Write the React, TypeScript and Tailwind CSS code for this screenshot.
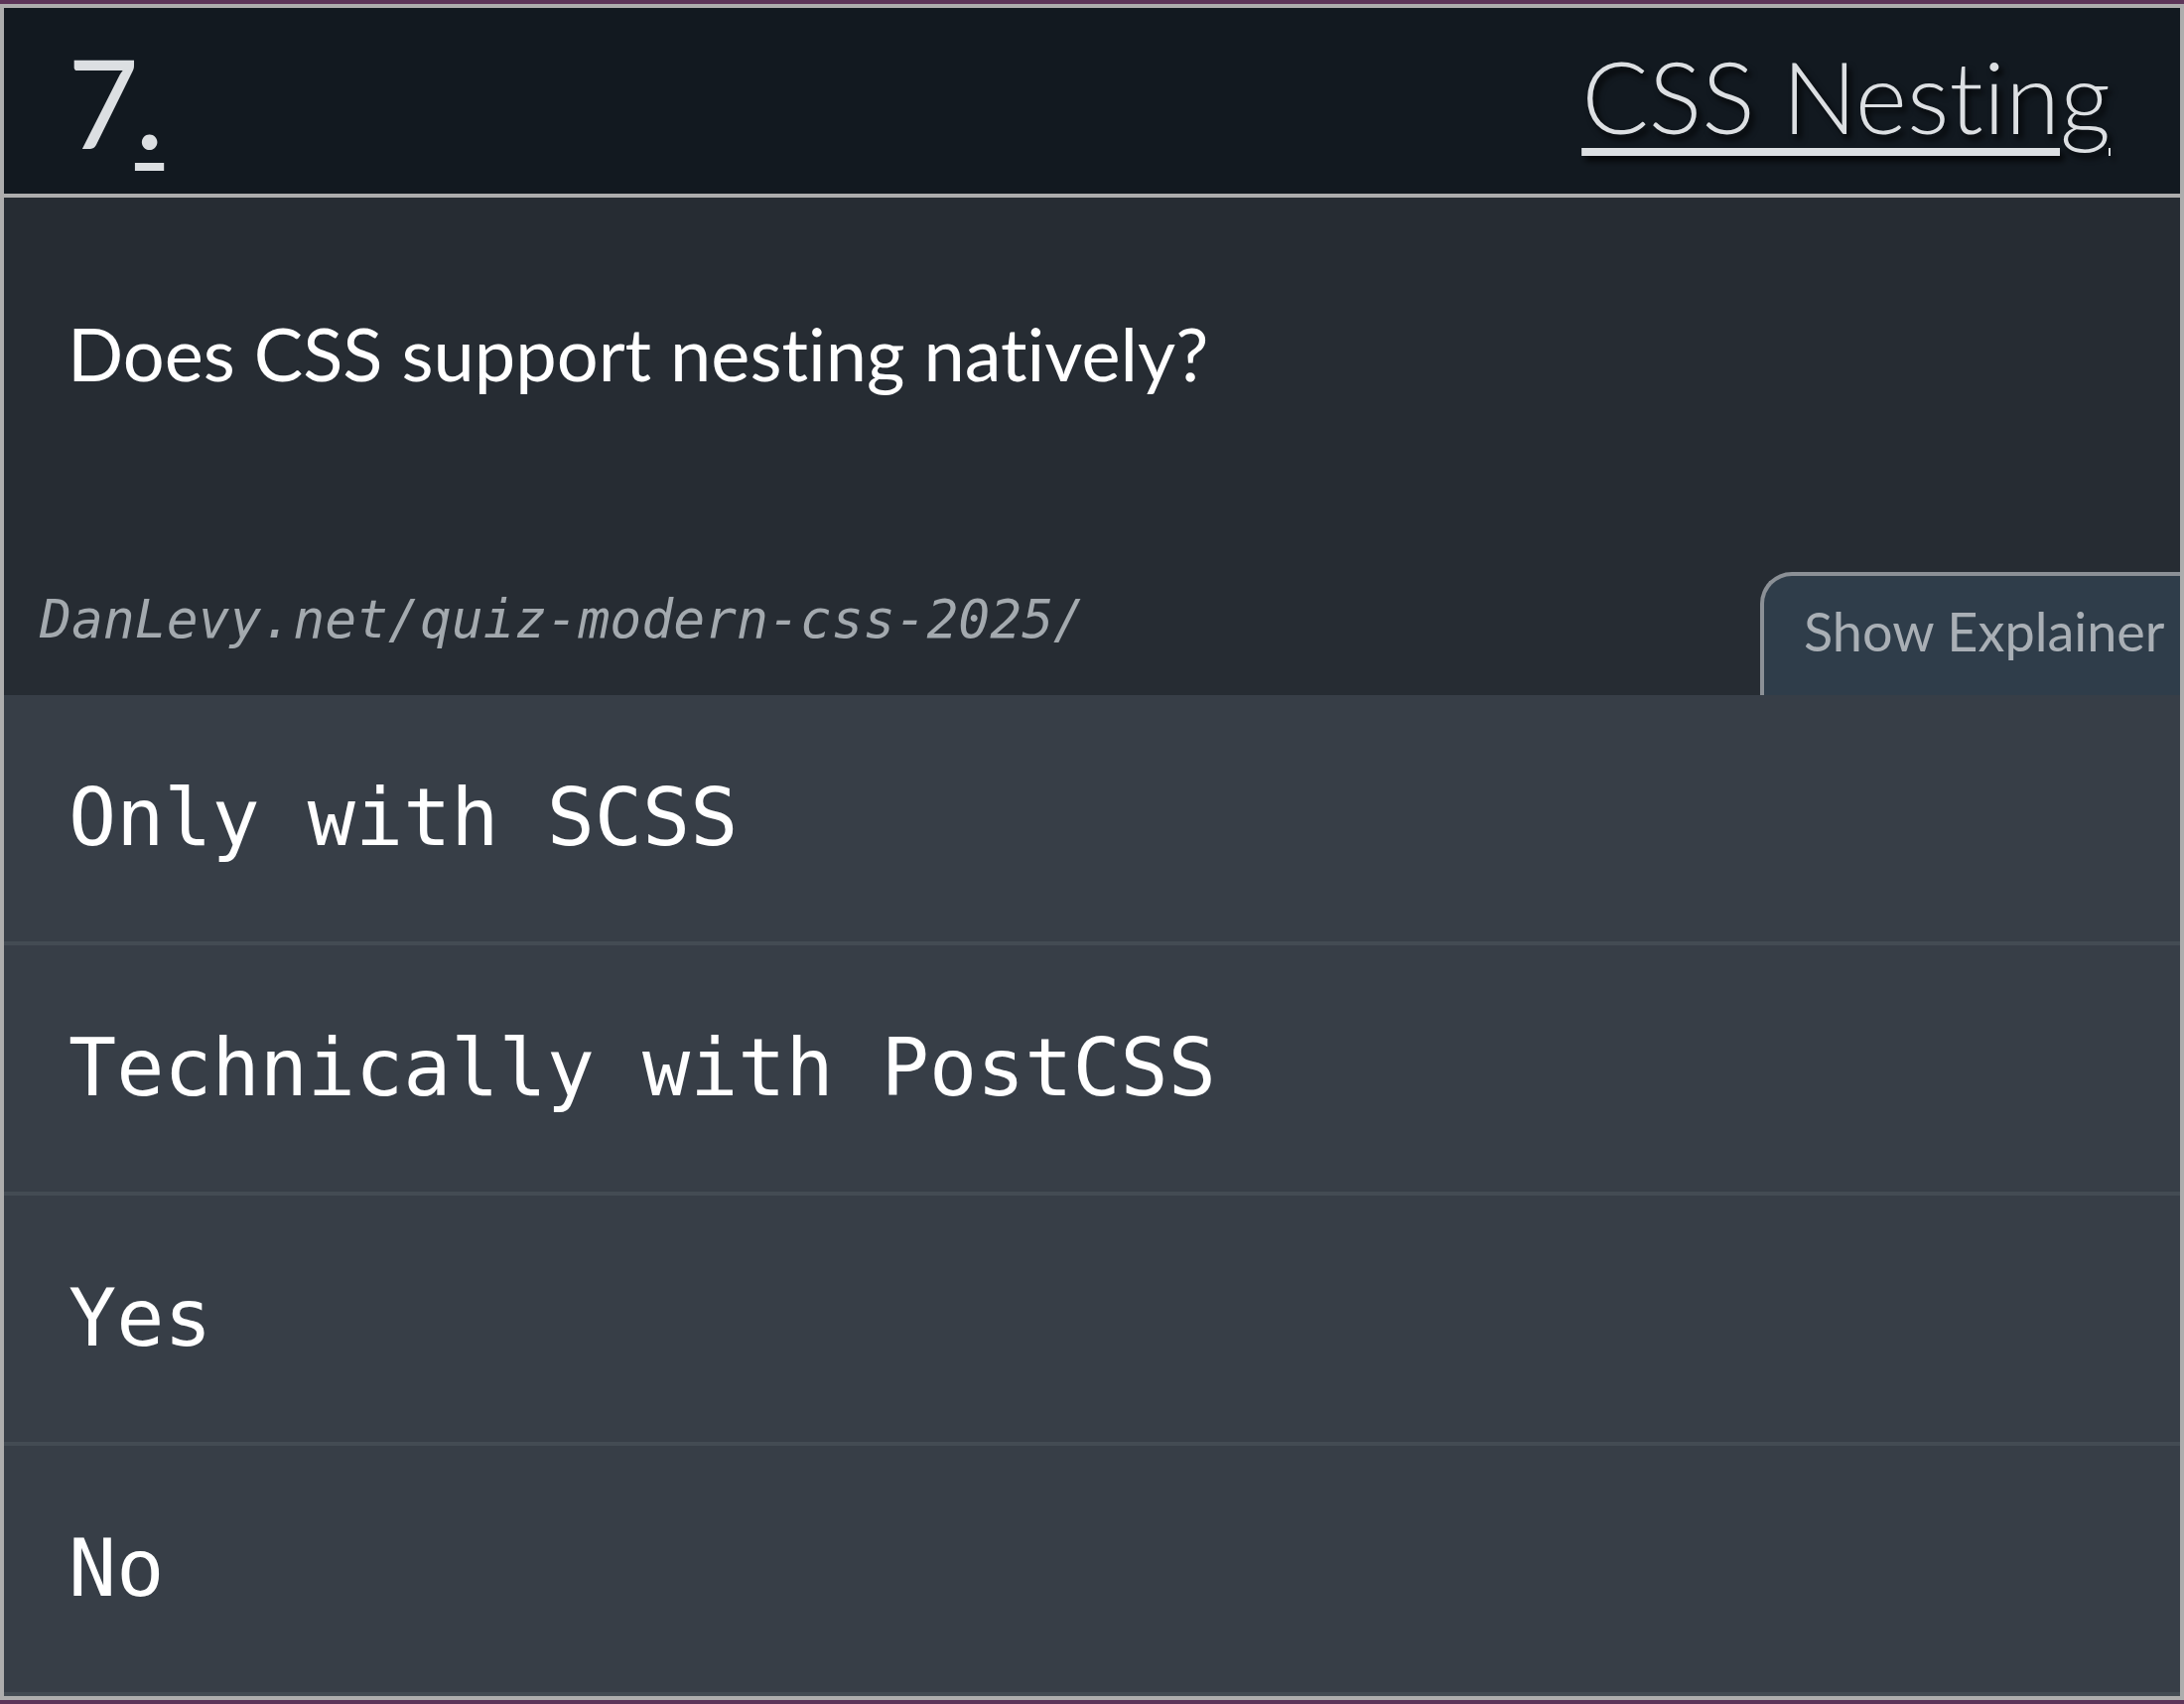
import React from "react";

const options = ["Only with SCSS", "Technically with PostCSS", "Yes", "No"];

export default function App() {
  return (
    <div className="w-[2200px] h-[1716px] bg-[#5c3458] py-[4px]">
      <div className="border-4 border-[#adadad] flex flex-col">
        <header className="h-[191px] bg-[#121920] border-b-4 border-[#adadad] flex items-center justify-between pl-[64px] pr-[70px]">
          <div
            className="text-[#dcdfe2] text-[124px] leading-none font-normal flex items-end [font-variant-ligatures:none]"
            style={{ fontFamily: "Lato, 'Open Sans', sans-serif" }}
          >
            <span>7</span>
            <span className="underline decoration-[8px] underline-offset-[14px] -ml-[4px]">.</span>
          </div>
          <a
            className="text-[#dcdfe2] text-[100px] leading-none font-light underline decoration-[8px] underline-offset-[14px] [text-shadow:4px_5px_6px_rgba(0,0,0,0.8)] -mt-[12px] [font-variant-ligatures:none]"
            style={{ fontFamily: "Lato, 'Open Sans', sans-serif" }}
          >
            CSS Nesting
          </a>
        </header>
        <section className="h-[501px] bg-[#262c33] flex flex-col justify-between">
          <h2
            className="text-white text-[74px] leading-none pl-[64px] pt-[120px] [font-variant-ligatures:none]"
            style={{ fontFamily: "Lato, 'Open Sans', sans-serif" }}
          >
            Does CSS support nesting natively?
          </h2>
          <div className="flex items-end justify-between">
            <div
              className="text-[#a3a9ae] text-[53px] italic leading-none pl-[36px] pb-[50px]"
              style={{ fontFamily: "'DejaVu Sans Mono', 'Liberation Mono', monospace" }}
            >
              DanLevy.net/quiz-modern-css-2025/
            </div>
            <button
              className="w-[423px] h-[124px] bg-[#2f3d4a] border-l-4 border-t-4 border-[#8b9096] rounded-tl-[32px] text-[#a9afb5] text-[54px] text-left pl-[40px] leading-none flex items-start pt-[29px] [font-variant-ligatures:none]"
              style={{ fontFamily: "Lato, 'Open Sans', sans-serif" }}
            >
              Show Explainer
            </button>
          </div>
        </section>
        <div className="flex flex-col">
          {options.map((o) => (
            <div
              key={o}
              className="h-[252px] bg-[#373e47] border-b-4 border-[#434b53] flex items-center pl-[65px] text-white text-[80px] leading-none"
              style={{ fontFamily: "'DejaVu Sans Mono', 'Liberation Mono', monospace" }}
            >
              {o}
            </div>
          ))}
        </div>
      </div>
    </div>
  );
}
